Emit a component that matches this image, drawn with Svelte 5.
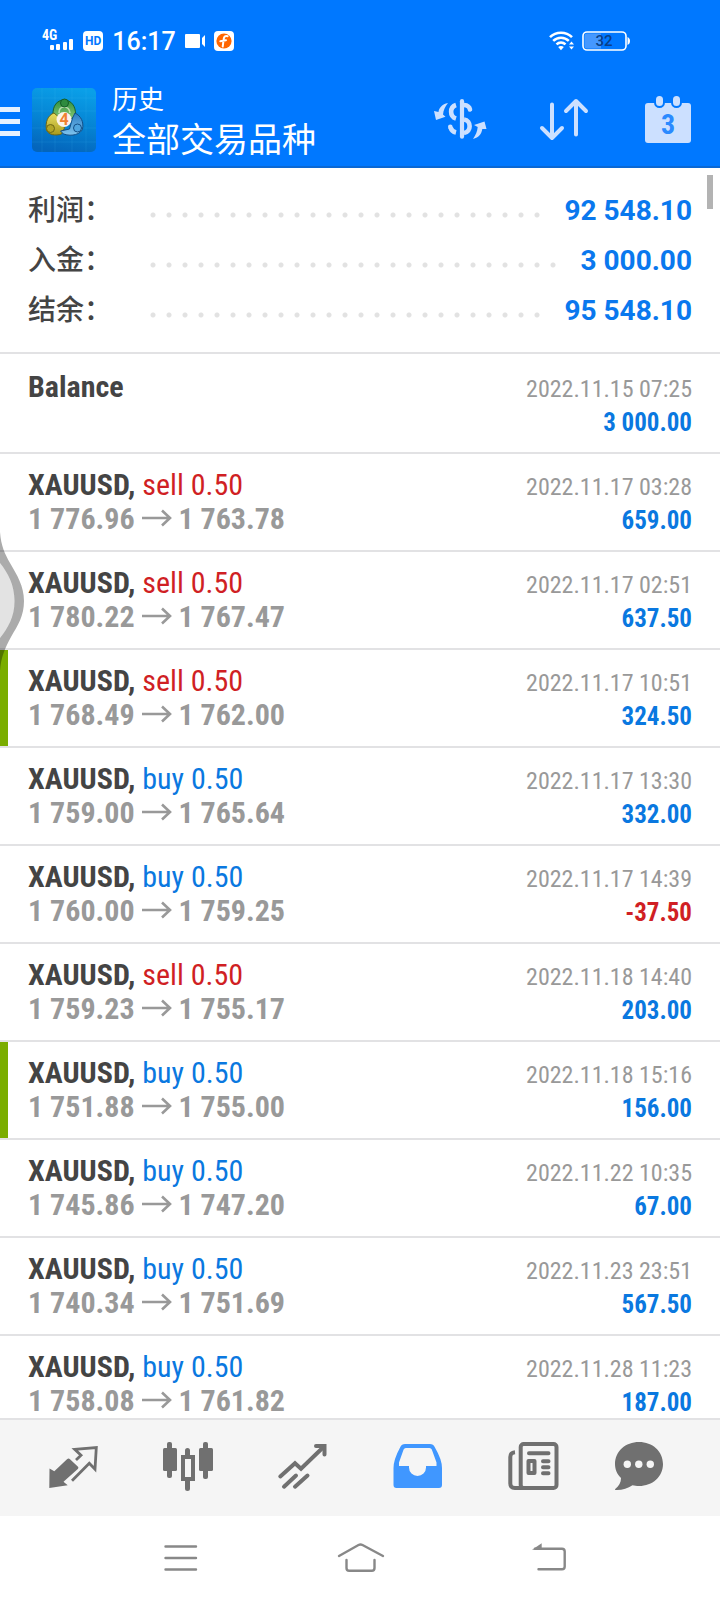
<script>
  const summary = [
    { label: '利润：', value: '92 548.10' },
    { label: '入金：', value: '3 000.00' },
    { label: '结余：', value: '95 548.10' }
  ];

  const deals = [
    { side: 'sell', open: '1 776.96', close: '1 763.78', time: '2022.11.17 03:28', profit: '659.00' },
    { side: 'sell', open: '1 780.22', close: '1 767.47', time: '2022.11.17 02:51', profit: '637.50' },
    { side: 'sell', open: '1 768.49', close: '1 762.00', time: '2022.11.17 10:51', profit: '324.50', marked: true },
    { side: 'buy', open: '1 759.00', close: '1 765.64', time: '2022.11.17 13:30', profit: '332.00' },
    { side: 'buy', open: '1 760.00', close: '1 759.25', time: '2022.11.17 14:39', profit: '-37.50' },
    { side: 'sell', open: '1 759.23', close: '1 755.17', time: '2022.11.18 14:40', profit: '203.00' },
    { side: 'buy', open: '1 751.88', close: '1 755.00', time: '2022.11.18 15:16', profit: '156.00', marked: true },
    { side: 'buy', open: '1 745.86', close: '1 747.20', time: '2022.11.22 10:35', profit: '67.00' },
    { side: 'buy', open: '1 740.34', close: '1 751.69', time: '2022.11.23 23:51', profit: '567.50' },
    { side: 'buy', open: '1 758.08', close: '1 761.82', time: '2022.11.28 11:23', profit: '187.00' }
  ];
</script>

<div class="screen">
  <header>
    <div class="status">
      <svg width="32" height="24" viewBox="0 0 32 24">
        <text x="0" y="11" class="net">4G</text>
        <g fill="#fff">
          <rect x="8" y="16" width="4" height="5" rx="1" />
          <rect x="14" y="15" width="4" height="6" rx="1" />
          <rect x="21" y="13" width="4" height="8" rx="1" />
          <rect x="27" y="10" width="4" height="11" rx="1" />
        </g>
      </svg>
      <span class="hd">HD</span>
      <time>16:17</time>
      <svg width="20" height="14" viewBox="0 0 20 14" fill="#fff">
        <rect x="0" y="0" width="15" height="14" rx="1" />
        <path d="M17 4l3-3v12l-3-3z" />
      </svg>
      <svg width="20" height="20" viewBox="0 0 20 20">
        <rect width="20" height="20" rx="4" fill="#fff" />
        <circle cx="10" cy="10" r="7.6" fill="#f60" />
        <path d="M13.6 5.2C11 4.4 10 6 9.700 8.200L8.700 15.500M6.300 10.200l5.700-1" fill="none" stroke="#fff" stroke-width="2" stroke-linecap="round" />
      </svg>
      <div class="power">
        <svg width="26" height="20" viewBox="0 0 26 20">
          <g fill="none" stroke="#fff" stroke-width="2.6">
            <path d="M1 6.200C7 .2 17 .2 23 6.200" />
            <path d="M4.200 9.900c4.400-4.200 11.200-4.200 15.600 0" />
            <path d="M7.500 13.400c2.600-2.400 6.400-2.400 9 0" />
          </g>
          <path d="M9.200 16c1.600-1.400 4-1.400 5.600 0L12 19.300z" fill="#fff" />
          <path d="M20 13.500l2.500-3 2.500 3zM20 15.500l2.500 3 2.500-3z" fill="#fff" />
        </svg>
        <svg width="48" height="20" viewBox="0 0 48 20">
          <path d="M5 2.500h14v15H5a2.500 2.500 0 0 1-2.500-2.500V5A2.500 2.500 0 0 1 5 2.500z" fill="#4598ff" />
          <rect x="1" y="1" width="43" height="18" rx="4" fill="none" stroke="#fff" stroke-width="1.600" />
          <path d="M45.500 6c1.800 1 2.500 2 2.500 4s-.7 3-2.500 4z" fill="#fff" />
          <text x="22" y="15" text-anchor="middle" class="charge">32</text>
        </svg>
      </div>
    </div>

    <div class="appbar">
      <button class="menu" aria-label="菜单">
        <svg width="20" height="32" viewBox="0 0 20 32" fill="#e6f1ff">
          <rect y="3" width="20" height="5" />
          <rect y="15" width="20" height="5" />
          <rect y="27" width="20" height="5" />
        </svg>
      </button>
      <svg class="logo" width="64" height="64" viewBox="0 0 64 64">
        <defs>
          <linearGradient id="sky" x1=".6" y1="0" x2=".4" y2="1">
            <stop offset="0" stop-color="#0a9fe8" />
            <stop offset=".55" stop-color="#0582d2" />
            <stop offset="1" stop-color="#0465bb" />
          </linearGradient>
          <linearGradient id="green" x1="0" y1="0" x2="0" y2="1">
            <stop offset="0" stop-color="#2f8f3c" />
            <stop offset="1" stop-color="#8ccb78" />
          </linearGradient>
          <linearGradient id="gold" x1="0" y1="0" x2="0" y2="1">
            <stop offset="0" stop-color="#e8de62" />
            <stop offset="1" stop-color="#a89a1c" />
          </linearGradient>
          <linearGradient id="azure" x1="0" y1="0" x2="0" y2="1">
            <stop offset="0" stop-color="#2a7cc4" />
            <stop offset="1" stop-color="#7fc4ee" />
          </linearGradient>
        </defs>
        <rect width="64" height="64" rx="5" fill="url(#sky)" />
        <path d="M10 0v64M23 0v64M40 0v64M54 0v64M0 10h64M0 23h64M0 40h64M0 54h64" stroke="#5cc6f5" stroke-opacity=".12" />
        <path d="M32 12c7 0 12 6 11.500 15L38 32H26l-5-5c-.5-9 4-15 11-15z" fill="url(#green)" stroke="#17602c" />
        <path d="M22 25c-6 2-9 9-7.500 17 2 5 9 6 15 4l3-6-7-12z" fill="url(#gold)" stroke="#6d6715" />
        <path d="M43 25c6 3 9 9 7.500 16-2 5-10 8-19 5l-3-3 9-2 3-11z" fill="url(#azure)" stroke="#134f87" />
        <path d="M27 25c0-4 2-6 5-6s5.500 2 6 6" fill="none" stroke="#dff0d0" stroke-width="1.500" stroke-opacity=".7" />
        <circle cx="32.500" cy="15" r="4" fill="#2e8b3e" stroke="#145c26" />
        <circle cx="18.500" cy="40.500" r="4" fill="#b3a628" stroke="#6d6715" />
        <circle cx="45.500" cy="40" r="4" fill="#4fa5e0" stroke="#134f87" />
        <circle cx="32" cy="31.500" r="7.500" fill="#fbf3ea" />
        <text x="32" y="37" text-anchor="middle" class="four">4</text>
      </svg>
      <div class="titles">
        <span class="section">历史</span>
        <h1>全部交易品种</h1>
      </div>
      <div class="actions">
        <button aria-label="货币">
          <svg width="64" height="56" viewBox="0 0 64 56" fill="#cce0ff">
            <path d="M20 11c-6 1-9 5-9.500 9L6 19l2 9 9.500-3.300-2.500-2.200c.5-4.500 2-8 5-11.500z" />
            <path d="M45 47c6-1.500 8.500-5 9.300-10h4.200l-2-7.500L46 33l3.700 2c-.4 4.500-2 8-4.700 12z" />
            <g fill="none" stroke="#cce0ff" stroke-width="4.600">
              <path d="M34 9.200v35.500" stroke-width="4.200" stroke-linecap="round" />
              <path d="M28 13c-6.500 2-6.500 11.500 0 13.500" />
              <path d="M36 13c3.500.3 5.500 2 6 4.500" stroke-linecap="round" />
              <path d="M36 27.500c7.500 1 7.500 12.500 0 13.500" />
              <path d="M22.500 35.500c.8 2.500 2.500 4.300 5.500 5" />
              <path d="M22.300 34.800v.1" stroke-linecap="round" />
            </g>
          </svg>
        </button>
        <button aria-label="排序">
          <svg width="64" height="56" viewBox="0 0 64 56" fill="none" stroke="#cce0ff" stroke-width="4" stroke-linecap="round" stroke-linejoin="round">
            <path d="M20 12.500V46M10 36l10 10 10-10" />
            <path d="M44 42.500V9M34 19L44 9l10 10" />
          </svg>
        </button>
        <button aria-label="日期">
          <svg width="64" height="56" viewBox="0 0 64 56">
            <rect x="9" y="11" width="46" height="40" rx="3" fill="#cce0ff" />
            <g fill="#cce0ff" stroke="#0078ff" stroke-width="2">
              <rect x="19" y="3" width="9" height="12" rx="4.500" />
              <rect x="36" y="3" width="9" height="12" rx="4.500" />
            </g>
            <text x="32" y="42" text-anchor="middle" class="day">3</text>
          </svg>
        </button>
      </div>
    </div>
  </header>

  <main>
    <dl>
      {#each summary as item}
        <div class="total">
          <dt>{item.label}</dt>
          <span class="dots"></span>
          <dd>{item.value}</dd>
        </div>
      {/each}
    </dl>

    <ul>
      <li class="first">
        <strong>Balance</strong>
        <time class="when">2022.11.15 07:25</time>
        <span>&#8203;</span>
        <b class="profit">3 000.00</b>
      </li>
      {#each deals as deal}
        <li class:marked={deal.marked}>
          <span><strong>XAUUSD,</strong> <span class={deal.side}>{deal.side} 0.50</span></span>
          <time class="when">{deal.time}</time>
          <span class="prices">
            {deal.open}
            <svg width="30" height="18" viewBox="0 0 30 18" fill="none" stroke="#999" stroke-width="2.600"><path d="M0 9h28M20 1.500L28 9l-8 7.500" /></svg>
            {deal.close}
          </span>
          <b class="profit" class:loss={deal.profit.startsWith('-')}>{deal.profit}</b>
        </li>
      {/each}
    </ul>
    <span class="thumb"></span>
  </main>

  <nav class="tabs">
    <button aria-label="行情">
      <svg width="64" height="56" viewBox="0 0 64 56">
        <path d="M8.500 28.500l4.800 2.800L26 19.200q1.600-1.400 3 0l8 7.600q1 1-.2 2.200L22.500 41.700l4.200 3.600L8.300 48z" fill="#707070" />
        <path d="M35 20l5-4.700-6.300-6L55.300 7.500 54 29.300l-5.700-6L31 40.700" fill="none" stroke="#707070" stroke-width="2.800" />
      </svg>
    </button>
    <button aria-label="图表">
      <svg width="64" height="56" viewBox="0 0 64 56" fill="#707070">
        <rect x="7" y="8" width="14" height="23" rx="1.500" />
        <rect x="11" y="2" width="5" height="36" rx="2" />
        <rect x="43" y="8" width="14" height="23" rx="1.500" />
        <rect x="47" y="2" width="5" height="37" rx="2" />
        <path d="M29 16v-5.500a2.500 2.500 0 0 1 5 0V16zM29 40v8.500a2.500 2.500 0 0 0 5 0V40z" />
        <rect x="27" y="17" width="10" height="22" fill="none" stroke="#707070" stroke-width="4" />
      </svg>
    </button>
    <button aria-label="交易">
      <svg width="64" height="56" viewBox="0 0 64 56" fill="none" stroke="#707070" stroke-width="4">
        <path d="M9.300 36.500L24 23.300l6 5.400L53 6.500" stroke-linecap="round" />
        <path d="M45 6h8.500v8.500M13 46.700L25 35.500M24 46.700L36.500 35.500" stroke-linecap="round" />
      </svg>
    </button>
    <button aria-label="历史" aria-current="page">
      <svg width="64" height="56" viewBox="0 0 64 56">
        <path fill-rule="evenodd" fill="#4097ff" d="M20 4h25q3.300 0 4.800 3.200Q57 19.500 57 28v17q0 3-3 3H11.500q-3 0-3-3V28q0-8.500 6.700-20.800Q16.700 4 20 4zM20.800 8q-1.500 0-2.200 1.500L14 22.500V26h10v1.500a8.500 8.500 0 0 0 17 0V26h10.500v-3.500L46.800 9.500Q46.200 8 44.500 8z" />
      </svg>
    </button>
    <button aria-label="新闻">
      <svg width="64" height="56" viewBox="0 0 64 56" fill="none" stroke="#707070" stroke-width="4">
        <rect x="20.700" y="4" width="35.800" height="44" rx="3" />
        <path d="M15 12.300c-3.300.3-4.700 1.700-4.700 4.700v26.500c0 3 1.500 4.500 4.500 4.500H24" />
        <path d="M29 13.200h19.500M43 21.200h5.500M43 27.200h5.500M43 33.200h5.500" stroke-linecap="round" />
        <rect x="28.500" y="21" width="6" height="12" stroke-linejoin="round" />
      </svg>
    </button>
    <button aria-label="消息">
      <svg width="64" height="56" viewBox="0 0 64 56">
        <path d="M24 2c13.500 0 24 9.300 24 22S37.500 46 24 46c-2.500 0-4.500-.3-6.500-.8C12.500 48.500 7 50.300.5 50c-.7-.3-.7-.8 0-1.300C4 46 6 42.500 6 38 2.200 34.500 0 29.500 0 24 0 11.300 10.500 2 24 2z" fill="#707070" />
        <g fill="#f5f5f5">
          <circle cx="12.300" cy="24.300" r="3.700" />
          <circle cx="23.800" cy="24.300" r="3.700" />
          <circle cx="35.300" cy="24.300" r="3.700" />
        </g>
      </svg>
    </button>
  </nav>

  <nav class="system">
    <button aria-label="最近任务">
      <svg width="64" height="56" viewBox="0 0 64 56" fill="none" stroke="#888" stroke-width="2.400" stroke-linecap="round">
        <path d="M17.500 16.500H48M17.500 28H48M17.500 39.500H48" />
      </svg>
    </button>
    <button aria-label="主屏幕">
      <svg width="64" height="56" viewBox="0 0 64 56" fill="none" stroke="#888" stroke-width="2.400" stroke-linecap="round">
        <path d="M11 26l19.500-11q2-1 4 0L55 26" />
        <path d="M18.500 30v8q0 2.700 2.700 2.700h22.600q2.700 0 2.700-2.700v-8" />
      </svg>
    </button>
    <button aria-label="返回">
      <svg width="64" height="56" viewBox="0 0 64 56" fill="none" stroke="#888" stroke-width="2.400" stroke-linecap="round">
        <path d="M27 18.800h27q2.700 0 2.700 2.700v15q0 2.700-2.700 2.700H30.500" />
        <path d="M24 19.800l9.700-6.500v6.500z" fill="#888" stroke="none" />
      </svg>
    </button>
  </nav>

  <svg class="edge" width="26" height="144" viewBox="0 0 26 144">
    <path d="M0 33C8 43 14.500 55 14.500 71S8 98 0 108z" fill="#000" fill-opacity=".11" />
    <path d="M0 2C1 16 5 24 10 33c7 12 14 23 14 38s-6 24-13 36c-6 11-10 20-11 34v-33c8-10 14.500-21 14.500-37S8 43 0 33z" fill="#000" fill-opacity=".33" />
  </svg>
</div>

<style>
  :global(body) {
    background: #fff;
  }
  .screen {
    position: relative;
    display: flex;
    flex-direction: column;
    height: 100vh;
    color: #444;
    font-family: Roboto, 'Noto Sans CJK SC', sans-serif;
  }
  svg {
    display: block;
    flex: none;
  }
  button {
    display: block;
    padding: 0;
    border: 0;
    background: none;
    cursor: pointer;
  }
  header {
    background: #0078ff;
    border-bottom: 2px solid #0a68d4;
    color: #fff;
  }
  .status {
    display: flex;
    align-items: center;
    gap: 9px;
    height: 80px;
    padding: 2px 90px 0 42px;
    box-sizing: border-box;
  }
  .net {
    font: 700 14px 'Roboto Condensed', Roboto, sans-serif;
    fill: #fff;
  }
  .hd {
    padding: 0 2px;
    border-radius: 4px;
    background: #fff;
    color: #0078ff;
    font: 700 12px/20px Roboto, sans-serif;
  }
  .status time {
    font-size: 25px;
    font-weight: 500;
  }
  .charge {
    font: 500 15px Roboto, sans-serif;
    fill: #0a3f86;
  }
  .power {
    display: flex;
    gap: 7px;
    margin-left: auto;
  }
  .appbar {
    display: flex;
    align-items: center;
    height: 80px;
    padding: 0 20px 6px 0;
  }
  .logo {
    margin: 0 16px 0 12px;
  }
  .titles {
    flex: 1;
    font-family: 'Noto Sans CJK SC', sans-serif;
  }
  .section {
    display: block;
    font-size: 26px;
    line-height: 36px;
  }
  h1 {
    margin: 0;
    font-size: 34px;
    font-weight: 400;
    line-height: 44px;
    white-space: nowrap;
  }
  .actions {
    display: flex;
    gap: 40px;
  }
  .four {
    font: 700 16px Roboto, sans-serif;
    fill: #f08030;
  }
  .day {
    font: 700 28px 'Roboto Condensed', Roboto, sans-serif;
    fill: #2a8aff;
  }
  main {
    position: relative;
    flex: 1;
    min-height: 0;
    overflow: hidden;
  }
  dl {
    margin: 0;
    padding: 17px 28px;
    border-bottom: 2px solid #e2e2e4;
  }
  .total {
    display: flex;
    align-items: center;
    height: 50px;
    font-size: 28px;
    line-height: 50px;
  }
  dt {
    width: 117px;
    font-family: 'Noto Sans CJK SC', sans-serif;
    font-weight: 500;
    line-height: 46px;
    padding-bottom: 4px;
  }
  .dots {
    flex: 1;
    height: 6px;
    margin-right: 20px;
    padding-top: 10px;
    background: radial-gradient(circle, #e2e2e2 2px, transparent 3px) left bottom / 16px 6px repeat-x;
  }
  dd {
    margin: 0;
    padding-top: 2px;
    color: #0a78ee;
    font-weight: 700;
    line-height: 48px;
  }
  ul {
    margin: 0;
    padding: 0;
    list-style: none;
    font-family: 'Roboto Condensed', Roboto, sans-serif;
  }
  li {
    display: grid;
    grid-template-columns: 1fr auto;
    grid-template-rows: 34px 34px;
    align-items: baseline;
    padding: 14px 28px;
    border-bottom: 2px solid #e2e2e4;
    font-size: 30px;
    line-height: 34px;
    white-space: nowrap;
  }
  .first {
    padding-top: 16px;
  }
  .marked {
    box-shadow: inset 8px 0 #7aad00;
  }
  .sell {
    color: #d01f24;
  }
  .buy {
    color: #0a78e0;
  }
  .when,
  .profit {
    justify-self: end;
    line-height: 30px;
  }
  .when {
    color: #999;
    font-size: 24px;
  }
  .profit {
    color: #0a78e0;
    font-size: 25px;
  }
  .profit.loss {
    color: #d01f24;
  }
  .prices {
    color: #999;
    font-weight: 700;
  }
  .prices svg {
    display: inline-block;
    vertical-align: 2px;
  }
  .thumb {
    position: absolute;
    top: 7px;
    right: 7px;
    width: 6px;
    height: 34px;
    background: #b3b3b3;
  }
  .tabs {
    display: grid;
    grid-template-columns: repeat(6, 1fr);
    justify-items: center;
    padding: 20px 16px;
    border-top: 2px solid #e2e2e4;
    background: #f5f5f5;
  }
  .system {
    display: grid;
    grid-template-columns: repeat(3, 1fr);
    justify-items: center;
    padding: 14px 12.5%;
    background: #fff;
  }
  .edge {
    position: absolute;
    left: 0;
    top: 530px;
  }
</style>
